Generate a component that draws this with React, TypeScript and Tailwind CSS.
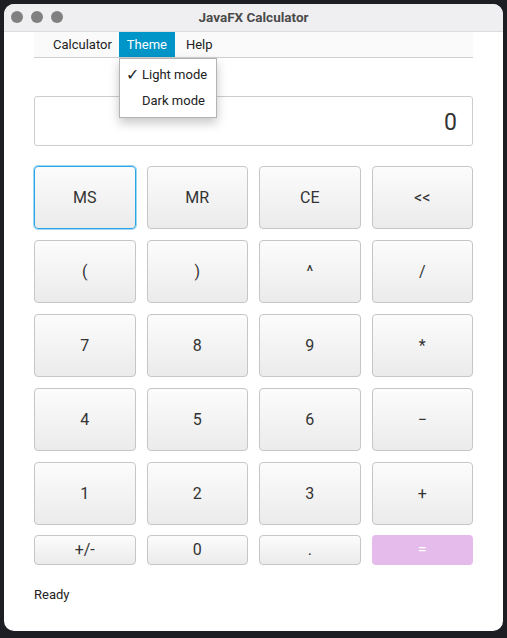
import { useState } from "react";

const KEYS = [
  "MS", "MR", "CE", "<<",
  "(", ")", "^", "/",
  "7", "8", "9", "*",
  "4", "5", "6", "−",
  "1", "2", "3", "+",
];

const FONT = { fontFamily: "Roboto, 'Noto Sans', 'Liberation Sans', sans-serif" };

function Key({ label, focused }: { label: string; focused?: boolean }) {
  return (
    <button
      className={
        "h-[63px] rounded-[4px] bg-gradient-to-b from-[#fcfcfc] to-[#ebebeb] text-[16px] text-[#333] " +
        (focused
          ? "border border-[#2aa6e6] shadow-[0_0_0_1px_#9fd6f2]"
          : "border border-[#c6c6c6]")
      }
    >
      {label}
    </button>
  );
}

function SmallKey({ label }: { label: string }) {
  return (
    <button className="h-[30px] rounded-[4px] border border-[#c6c6c6] bg-gradient-to-b from-[#fcfcfc] to-[#ebebeb] text-[16px] text-[#333]">
      {label}
    </button>
  );
}

export default function App() {
  const [display] = useState("0");

  return (
    <div className="w-[507px] h-[638px] bg-[#1d1d24] pt-[4px] pl-[4px]" style={FONT}>
      <div className="w-[499px] h-[627px] rounded-[10px] bg-white overflow-hidden flex flex-col">
        {/* title bar */}
        <div className="relative h-[28px] shrink-0 bg-[#efeff1] border-b border-[#dcdcdc] flex items-center justify-center">
          <div className="absolute left-[7px] top-[7px] flex gap-[8px]">
            <span className="w-[12px] h-[12px] rounded-full bg-[#808080]" />
            <span className="w-[12px] h-[12px] rounded-full bg-[#808080]" />
            <span className="w-[12px] h-[12px] rounded-full bg-[#808080]" />
          </div>
          <span className="text-[13.5px] font-bold text-[#4b4b4b]">JavaFX Calculator</span>
        </div>

        <div className="px-[30px] flex flex-col">
          {/* menu bar */}
          <div className="relative h-[26px] bg-[#fafafa] border-b border-[#cfcfcf] flex items-stretch pl-[11px] text-[13px] text-[#222]">
            <div className="pl-[8px] pr-[7px] flex items-center">Calculator</div>
            <div className="px-[8px] flex items-center bg-[#0095c8] text-white">Theme</div>
            <div className="px-[11px] flex items-center">Help</div>

            <div className="absolute left-[85px] top-[26px] z-10 w-[98px] bg-white border border-[#b3b3b3] shadow-[0_5px_10px_rgba(0,0,0,0.22)] py-[3px] text-[13px] text-[#222]">
              <div className="h-[26px] flex items-center pl-[6px]">
                <span className="w-[16px] text-[16px] leading-none">✓</span>
                <span>Light mode</span>
              </div>
              <div className="h-[26px] flex items-center pl-[22px]">Dark mode</div>
            </div>
          </div>

          {/* display */}
          <div className="mt-[38px] h-[50px] rounded-[3px] border border-[#cdcdcd] bg-white flex items-center justify-end pr-[15px] pt-[5px] text-[23px] text-[#333]">
            {display}
          </div>

          {/* keypad */}
          <div className="mt-[20px] grid grid-cols-4 gap-x-[11px] gap-y-[11px]">
            {KEYS.map((k, i) => (
              <Key key={k} label={k} focused={i === 0} />
            ))}
          </div>
          <div className="mt-[10px] grid grid-cols-4 gap-x-[11px]">
            <SmallKey label="+/-" />
            <SmallKey label="0" />
            <SmallKey label="." />
            <button className="h-[30px] rounded-[4px] bg-[#e4bbeb] text-[16px] text-white">=</button>
          </div>

          <div className="mt-[20px] text-[13px] text-[#222]">Ready</div>
        </div>
      </div>
    </div>
  );
}
